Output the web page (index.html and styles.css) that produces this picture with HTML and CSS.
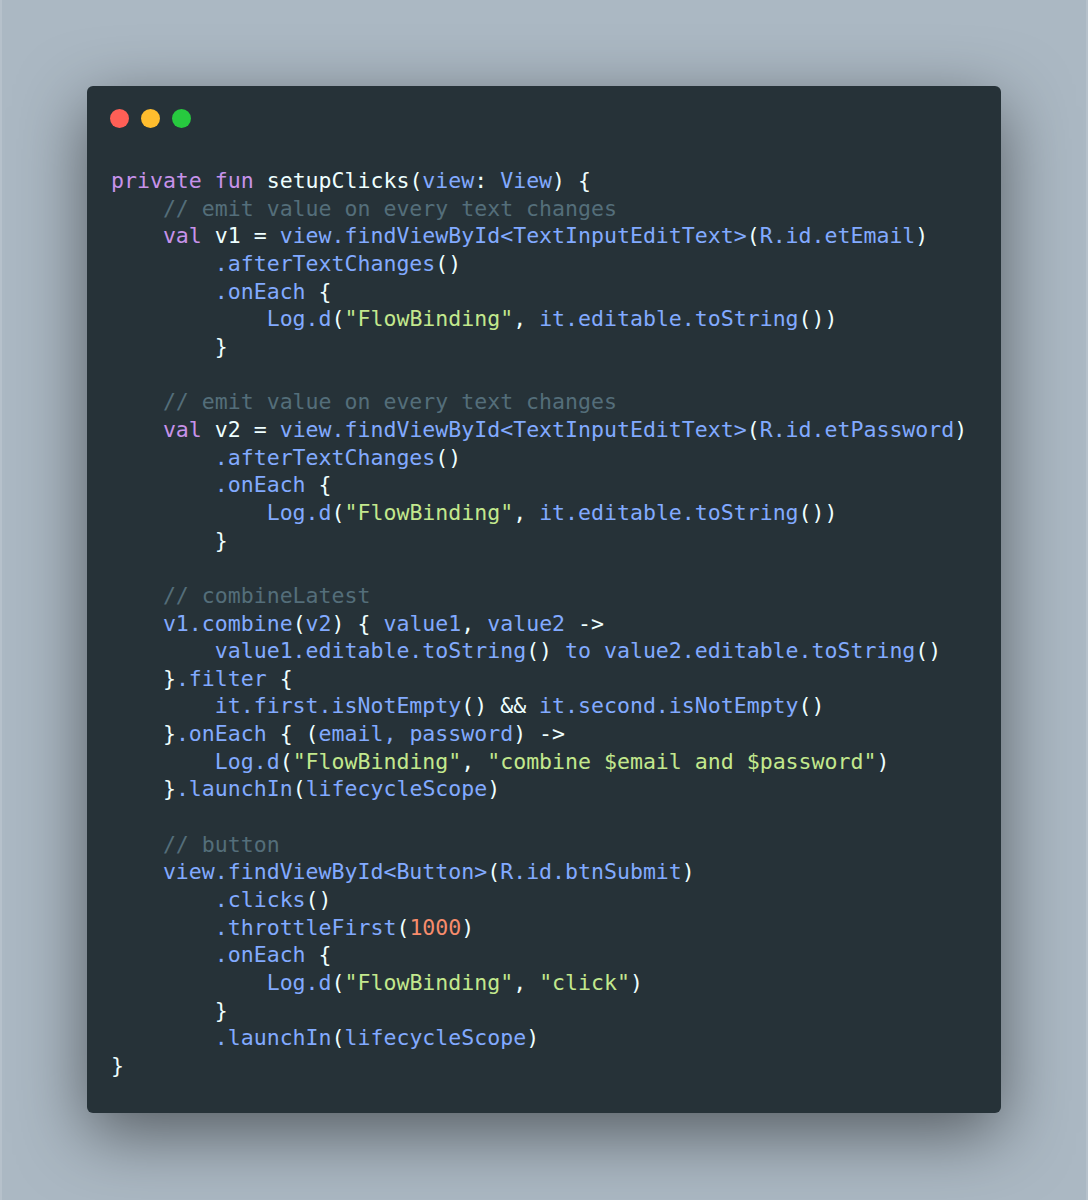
FILE: index.html
```html
<!DOCTYPE html>
<html>
<head>
<meta charset="utf-8">
<link rel="stylesheet" href="styles.css">
</head>
<body>
<div class="frame">
  <div class="window">
    <div class="controls">
      <span class="dot red"></span>
      <span class="dot yellow"></span>
      <span class="dot green"></span>
    </div>
<pre class="code"><span class="k">private</span> <span class="k">fun</span> setupClicks(<span class="b">view</span>: <span class="b">View</span>) {
    <span class="c">// emit value on every text changes</span>
    <span class="k">val</span> v1 = <span class="b">view.findViewById&lt;TextInputEditText&gt;</span>(<span class="b">R.id.etEmail</span>)
        <span class="b">.afterTextChanges</span>()
        <span class="b">.onEach</span> {
            <span class="b">Log.d</span>(<span class="s">"FlowBinding"</span>, <span class="b">it.editable.toString</span>())
        }

    <span class="c">// emit value on every text changes</span>
    <span class="k">val</span> v2 = <span class="b">view.findViewById&lt;TextInputEditText&gt;</span>(<span class="b">R.id.etPassword</span>)
        <span class="b">.afterTextChanges</span>()
        <span class="b">.onEach</span> {
            <span class="b">Log.d</span>(<span class="s">"FlowBinding"</span>, <span class="b">it.editable.toString</span>())
        }

    <span class="c">// combineLatest</span>
    <span class="b">v1.combine</span>(<span class="b">v2</span>) { <span class="b">value1</span>, <span class="b">value2</span> -&gt;
        <span class="b">value1.editable.toString</span>() <span class="b">to</span> <span class="b">value2.editable.toString</span>()
    }<span class="b">.filter</span> {
        <span class="b">it.first.isNotEmpty</span>() &amp;&amp; <span class="b">it.second.isNotEmpty</span>()
    }<span class="b">.onEach</span> { (<span class="b">email, password</span>) -&gt;
        <span class="b">Log.d</span>(<span class="s">"FlowBinding"</span>, <span class="s">"combine $email and $password"</span>)
    }<span class="b">.launchIn</span>(<span class="b">lifecycleScope</span>)

    <span class="c">// button</span>
    <span class="b">view.findViewById&lt;Button&gt;</span>(<span class="b">R.id.btnSubmit</span>)
        <span class="b">.clicks</span>()
        <span class="b">.throttleFirst</span>(<span class="n">1000</span>)
        <span class="b">.onEach</span> {
            <span class="b">Log.d</span>(<span class="s">"FlowBinding"</span>, <span class="s">"click"</span>)
        }
        <span class="b">.launchIn</span>(<span class="b">lifecycleScope</span>)
}</pre>
  </div>
</div>
</body>
</html>
```
FILE: styles.css
```css
html, body {
  margin: 0;
  padding: 0;
}

body {
  width: 1088px;
  height: 1200px;
  background: #abb8c3;
}

.frame {
  box-sizing: border-box;
  width: 1088px;
  height: 1200px;
  padding: 86px 85px 87px 85px;
  border-left: 2px solid #b6c1cb;
  border-right: 2px solid #b6c1cb;
}

.window {
  box-sizing: border-box;
  width: 914px;
  height: 1027px;
  background: #263238;
  border-radius: 6px;
  box-shadow: 0 20px 68px rgba(0, 0, 0, 0.5);
  padding: 23px 0 0 23px;
}

.controls {
  display: flex;
  gap: 12px;
  height: 19px;
}

.dot {
  width: 19px;
  height: 19px;
  border-radius: 50%;
  display: block;
}

.red { background: #ff5f56; }
.yellow { background: #ffbd2e; }
.green { background: #27c93f; }

.code {
  margin: 39px 0 0 1px;
  font-family: "DejaVu Sans Mono", "Liberation Mono", monospace;
  font-size: 21.55px;
  line-height: 27.66px;
  color: #eeffff;
  white-space: pre;
}

.k { color: #c792ea; }
.b { color: #82aaff; }
.c { color: #546e7a; }
.s { color: #c3e88d; }
.n { color: #f78c6c; }
```
